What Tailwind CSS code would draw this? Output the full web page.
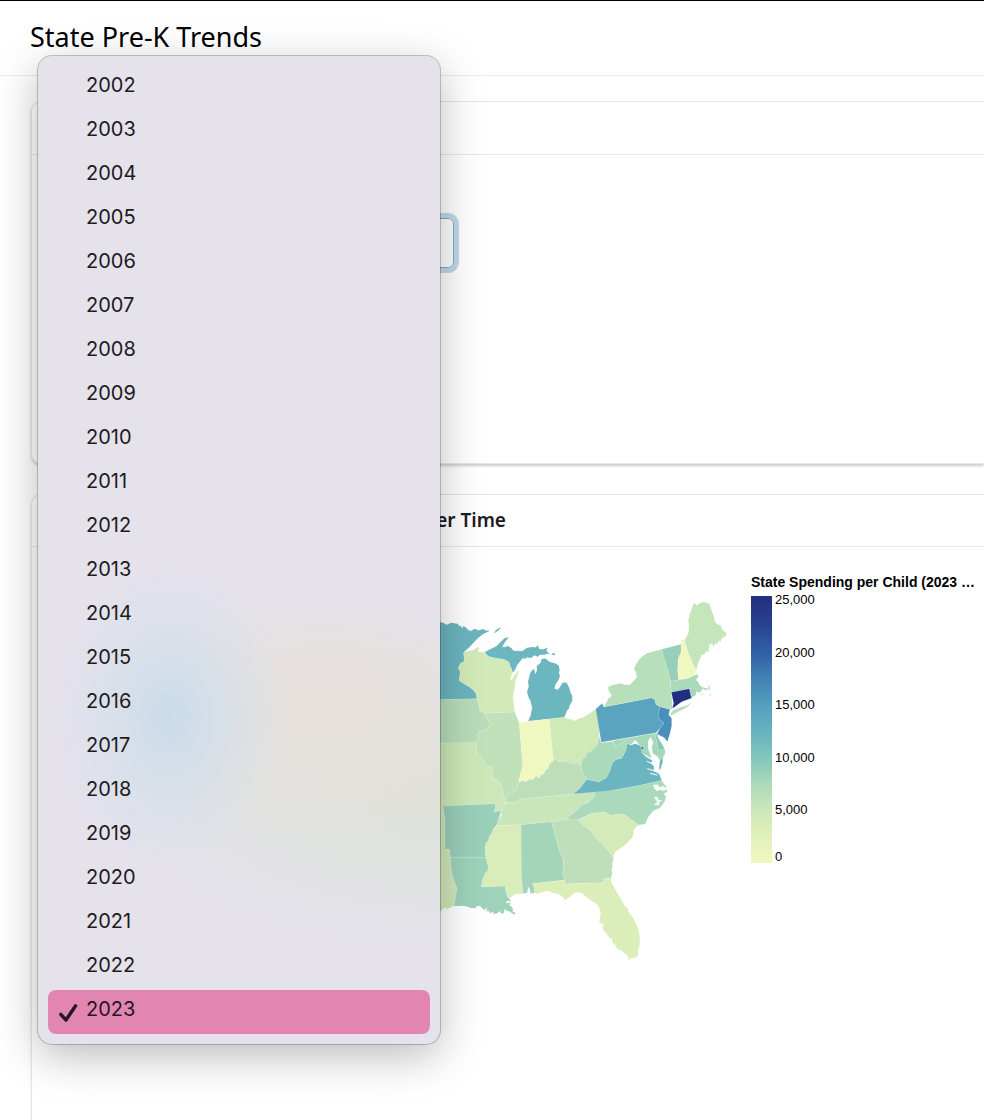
<!DOCTYPE html>
<html lang="en">
<head>
<meta charset="utf-8">
<title>State Pre-K Trends</title>
<script src="https://cdn.jsdelivr.net/npm/@tailwindcss/browser@4"></script>
</head>
<body class="h-screen overflow-hidden bg-white font-['Noto_Sans','Open_Sans',sans-serif] text-black">
<div class="flex min-h-full flex-col border-t border-black">
  <header class="flex h-[75px] shrink-0 items-center border-b border-[#e9e9e9] pb-[2px] pl-[30px]">
    <h1 class="text-[27px] leading-9">State Pre-K Trends</h1>
  </header>
  <main class="flex flex-col gap-[30px] pt-[25px] pl-[31px]">
    <section class="flex h-[363px] flex-col rounded-l-[10px] border border-r-0 border-[#e6e6e6] shadow-[0_2px_3px_rgba(0,0,0,0.2)]">
      <div class="h-[53px] shrink-0 border-b border-[#e9e9e9]"></div>
      <div class="relative pt-[63px] pl-5">
        <select id="year" aria-label="Year" class="block h-[50px] w-[402px] appearance-none rounded-md border border-[#7aaccd] bg-white outline-[5px] outline-[#bed9ea]">
          <option selected>2023</option>
        </select>
        <div role="listbox" aria-label="Year" class="absolute -top-[99px] left-[6px] z-10 flex w-[402px] flex-col rounded-[14px] bg-[#e5e2ec] bg-[radial-gradient(ellipse_115px_150px_at_132px_660px,#c9dbea_0%,#d2dfeab0_45%,#e5e2ec00_100%),radial-gradient(ellipse_220px_130px_at_285px_655px,#e6e0da_0%,#e6e1dcb0_50%,#e5e2ec00_100%),radial-gradient(ellipse_330px_160px_at_402px_735px,#dee1d8_0%,#dfe2dde0_45%,#e5e2ec00_100%)] px-[10px] py-[10px] font-['Inter',sans-serif] text-[20px] text-[#1c1b20] shadow-[0_0_0_1px_rgba(0,0,0,0.22),0_12px_44px_rgba(0,0,0,0.27)]">
          <button role="option" class="h-11 pb-[6px] pl-[38px] text-left">2002</button>
          <button role="option" class="h-11 pb-[6px] pl-[38px] text-left">2003</button>
          <button role="option" class="h-11 pb-[6px] pl-[38px] text-left">2004</button>
          <button role="option" class="h-11 pb-[6px] pl-[38px] text-left">2005</button>
          <button role="option" class="h-11 pb-[6px] pl-[38px] text-left">2006</button>
          <button role="option" class="h-11 pb-[6px] pl-[38px] text-left">2007</button>
          <button role="option" class="h-11 pb-[6px] pl-[38px] text-left">2008</button>
          <button role="option" class="h-11 pb-[6px] pl-[38px] text-left">2009</button>
          <button role="option" class="h-11 pb-[6px] pl-[38px] text-left">2010</button>
          <button role="option" class="h-11 pb-[6px] pl-[38px] text-left">2011</button>
          <button role="option" class="h-11 pb-[6px] pl-[38px] text-left">2012</button>
          <button role="option" class="h-11 pb-[6px] pl-[38px] text-left">2013</button>
          <button role="option" class="h-11 pb-[6px] pl-[38px] text-left">2014</button>
          <button role="option" class="h-11 pb-[6px] pl-[38px] text-left">2015</button>
          <button role="option" class="h-11 pb-[6px] pl-[38px] text-left">2016</button>
          <button role="option" class="h-11 pb-[6px] pl-[38px] text-left">2017</button>
          <button role="option" class="h-11 pb-[6px] pl-[38px] text-left">2018</button>
          <button role="option" class="h-11 pb-[6px] pl-[38px] text-left">2019</button>
          <button role="option" class="h-11 pb-[6px] pl-[38px] text-left">2020</button>
          <button role="option" class="h-11 pb-[6px] pl-[38px] text-left">2021</button>
          <button role="option" class="h-11 pb-[6px] pl-[38px] text-left">2022</button>
          <button role="option" aria-selected="true" class="flex h-11 items-start gap-2 rounded-lg bg-[#e385b1] pt-1 pl-[10px] text-left text-[#231720]">
            <svg class="mt-[9px] h-5 w-5" viewBox="0 0 20 20" fill="none" stroke="currentColor" stroke-width="3.4" stroke-linecap="round" stroke-linejoin="round" aria-hidden="true"><path d="M2.8 11.4 L8 17 L17.6 2.8"/></svg>
            <span>2023</span>
          </button>
        </div>
      </div>
    </section>
    <section class="flex h-[680px] shrink-0 flex-col rounded-l-[10px] border border-r-0 border-[#e6e6e6] shadow-[0_2px_3px_rgba(0,0,0,0.1)]">
      <div class="flex h-[52px] shrink-0 items-center border-b border-[#e9e9e9]">
        <h2 class="w-[474px] text-right text-[19px] font-semibold text-[#1c1c1f]">Over Time</h2>
      </div>
      <div class="flex pt-[24px]">
        <svg class="mt-[19px] ml-[398px] h-[380px] w-[300px] shrink-0" viewBox="0 0 900 1140" role="img" aria-label="Map of state spending per child" stroke="#ffffff" stroke-opacity=".14" stroke-width="2.5" stroke-linejoin="round">
          <!-- Minnesota -->
          <path fill="#6bb5bf" d="M0 95L32 97 40 98 46 102 52 104 57 101 62 98 70 99 82 101 88 107 93 109 97 115 100 108 107 112 112 117 120 123 127 121 134 116 144 121 154 119 160 116 165 121 180 122 160 132 145 143 132 157 118 172 106 182 101 187 103 214 90 222 85 235 91 245 88 272 105 283 120 292 134 304 139 313 141 326 0 330Z"/>
          <path fill="#6bb5bf" d="M192 129L198 120 208 113 213 112 207 120 195 129Z"/>
          <!-- Wisconsin -->
          <path fill="#d2eab8" d="M101 187L112 184 130 180 144 171 148 176 145 186 160 187 166 192 175 199 200 205 222 208 238 217 240 228 245 236 248 247 243 262 240 272 247 268 258 250 268 237 264 252 256 275 255 292 250 310 249 330 253 350 254 366 200 368 163 370 149 361 146 340 141 326 139 313 134 304 120 292 105 283 88 272 91 245 85 235 90 222 103 214Z"/>
          <!-- Michigan -->
          <path fill="#6bb6bf" d="M163 187L180 178 200 168 212 155 224 144 237 142 228 152 220 165 217 172 222 170 226 172 232 167 244 174 249 180 254 183 266 182 276 184 290 174 304 171 318 172 324 164 327 177 340 178 352 173 350 183 360 193 350 191 345 194 330 194 322 201 318 197 310 197 306 203 298 204 292 202 286 206 278 205 272 212 262 224 257 236 250 247 248 247 245 236 240 228 238 217 222 208 200 205 175 199Z"/>
          <path fill="#6bb6bf" d="M364 194L370 188 376 191 374 196Z"/>
          <path fill="#6bb6bf" d="M334 208L344 205 352 209 358 215 375 220 386 226 389 240 387 248 390 258 386 270 376 284 374 296 384 299 392 287 398 278 404 277 410 278 418 294 421 306 427 318 427 332 420 345 417 355 411 362 403 382 358 387 294 394 302 376 306 352 302 335 294 318 291 305 296 290 294 275 298 258 302 245 312 236 316 252 321 240 320 228 332 218Z"/>
          <!-- Iowa, Missouri, Illinois -->
          <path fill="#b8dcba" d="M0 330L141 326 146 340 149 361 163 370 168 380 175 390 181 402 178 410 170 418 147 425 142 435 145 445 138 458 0 460Z"/>
          <path fill="#cde8b8" d="M0 460L138 458 139 480 145 495 160 510 165 523 172 530 183 528 190 538 185 555 187 565 198 570 210 578 217 595 219 612 230 626 226 640 219 650 214 663 190 665 197 654 195 641 110 645 38 648 0 648Z"/>
          <path fill="#c1e1bb" d="M163 370L254 366 262 385 268 400 277 510 279 528 272 550 266 575 262 588 260 600 252 602 244 610 232 610 228 628 219 612 217 595 210 578 198 570 187 565 185 555 190 538 183 528 172 530 165 523 160 510 145 495 139 480 138 458 145 445 142 435 147 425 170 418 178 410 181 402 175 390 168 380Z"/>
          <!-- Indiana, Ohio -->
          <path fill="#f0f8c1" d="M268 399L292 394 358 387 366 470 370 512 358 523 355 535 347 540 340 555 335 551 328 564 318 558 308 570 300 567 288 576 277 569 266 578 272 550 279 528 277 510Z"/>
          <path fill="#d0e9b8" d="M358 387L403 382 415 388 422 387 435 392 445 386 460 382 480 370 497 357 505 395 508 420 508 440 500 468 480 485 470 490 467 500 458 505 452 528 440 516 430 524 425 519 415 520 408 513 390 516 375 508 370 512 366 470Z"/>
          <!-- Kentucky, Tennessee -->
          <path fill="#bddeb9" d="M228 638L229 622 232 610 244 610 252 602 260 600 264 578 277 571 288 576 300 567 308 570 318 558 328 564 335 551 340 555 347 540 355 535 358 523 370 512 375 508 390 516 408 513 415 520 425 519 430 524 440 516 452 528 458 550 472 568 465 575 450 595 430 612 300 625 268 628 265 635Z"/>
          <path fill="#c8e6ba" d="M228 638L265 635 268 628 300 625 430 612 495 604 493 620 475 638 455 645 435 665 415 680 410 688 365 695 273 704 200 707 205 690 214 675 214 663 219 650Z"/>
          <!-- Arkansas, Louisiana, Texas, Mississippi -->
          <path fill="#9acfba" d="M38 648L195 641 197 654 190 665 214 663 210 675 205 690 200 705 190 716 187 728 178 740 175 752 168 760 165 780 168 802 61 802 58 778 45 778 45 690Z"/>
          <path fill="#cfe8b9" d="M0 648L38 648 45 690 45 778 58 778 61 802 65 848 75 880 81 895 75 930 72 948 50 958 45 952 30 965 0 985Z"/>
          <path fill="#9ed2ba" d="M61 802L168 802 175 830 174 842 165 850 158 870 154 890 225 888 228 905 233 920 243 932 230 934 228 940 242 937 238 946 245 950 250 958 247 963 257 970 252 974 240 965 230 962 224 957 222 968 215 972 209 964 200 971 192 972 189 966 180 970 175 962 168 965 172 954 162 960 150 948 140 948 138 955 125 955 105 948 72 948 75 930 81 895 75 880 65 848Z"/>
          <path fill="#d9edba" d="M200 707L274 704 274 860 279 912 255 912 243 922 233 924 228 905 225 888 154 890 158 870 165 850 174 842 175 830 168 802 165 780 168 760 175 752 178 740 187 728 190 716Z"/>
          <!-- Alabama, Georgia, Florida -->
          <path fill="#a4d5bb" d="M273 704L365 695 385 770 391 790 401 810 400 840 398 850 404 870 308 881 314 895 314 908 302 912 299 896 295 891 291 910 279 910 274 860Z"/>
          <path fill="#bedfb9" d="M365 695L410 688 450 685 449 694 460 705 480 720 500 745 520 765 540 788 550 802 550 812 547 818 548 830 545 838 547 850 543 865 522 866 520 884 517 878 405 882 404 870 398 850 400 840 401 810 391 790 385 770Z"/>
          <path fill="#dbeeba" d="M308 881L404 870 405 882 517 878 520 884 522 866 543 865 545 880 560 905 575 930 582 945 595 957 594 964 610 985 622 1010 628 1030 630 1062 624 1080 624 1095 620 1102 605 1104 597 1110 590 1095 575 1082 562 1078 556 1065 548 1060 546 1045 540 1046 525 1025 517 1015 521 1004 512 1000 508 998 512 970 508 955 500 942 480 930 460 913 445 906 430 911 415 925 405 930 395 918 385 912 370 910 355 902 340 905 320 912 314 908 314 895Z"/>
          <!-- Carolinas -->
          <path fill="#aadabb" d="M495 604L540 602 630 586 695 571 700 580 708 588 712 605 700 612 708 618 705 632 697 645 688 655 670 662 655 680 646 702 625 705 580 672 540 676 525 667 480 672 450 687 410 688 415 680 435 665 455 645 475 638 493 620Z"/>
          <path fill="#fff" stroke="none" d="M669 584L683 584 690 592 699 588 712 596 703 602 690 600 680 603 672 594ZM672 622L682 620 686 630 697 632 686 638 690 644 671 645 682 636Z"/>
          <path fill="#d3ebb9" d="M450 687L480 672 495 668 525 667 540 676 580 672 626 705 612 718 608 742 588 762 568 778 555 785 550 802 540 788 520 765 500 745 480 720 460 705 449 694Z"/>
          <!-- Virginia, West Virginia, Maryland, Delaware -->
          <path fill="#6bb5c0" d="M430 612L450 595 465 575 472 568 490 572 508 575 530 562 540 540 548 515 560 508 575 504 588 480 590 460 604 466 613 461 626 464 638 474 637 490 648 500 668 512 663 518 672 530 671 542 688 552 691 560 695 571 630 586 540 602Z"/>
          <path fill="none" stroke="#fff" stroke-opacity="1" stroke-width="3" d="M650 514L670 522M652 536L676 544M660 550L682 555"/>
          <path fill="#6bb5c0" d="M687 536L690 510 698 500 698 517 690 540Z"/>
          <path fill="#abdabb" d="M452 528L458 505 467 500 470 490 480 485 500 468 508 440 514 458 550 454 555 475 570 462 590 450 615 450 604 464 590 460 588 480 575 504 560 508 548 515 540 540 530 562 508 575 490 572 472 568 458 550Z"/>
          <path fill="#a5d7bb" d="M550 452L675 430 683 470 705 480 706 490 698 503 690 512 683 500 668 490 665 470 670 458 661 440 654 455 655 478 660 490 665 505 655 500 635 488 632 468 615 450 590 450 570 462 555 475Z"/>
          <path fill="#88c9bc" d="M675 430L681 431 685 445 698 465 705 480 685 478Z"/>
          <path fill="#3b3f80" stroke="none" d="M636 471L640 474 637 478 634 474Z"/>
          <!-- Pennsylvania, New Jersey, New York -->
          <path fill="#5ba4c0" d="M497 357L517 340 521 351 665 323 675 330 678 343 690 350 684 375 688 388 702 400 690 415 678 428 514 457Z"/>
          <path fill="#4a8ebb" d="M690 350L720 358 716 374 725 385 725 408 720 430 712 455 703 443 681 432 690 415 702 400 688 388 684 375Z"/>
          <path fill="#b7dfba" d="M521 351L535 326 545 318 535 300 535 290 550 284 570 280 585 284 600 284 610 274 620 262 618 245 612 238 618 222 630 205 650 190 695 178 705 215 715 245 721 274 724 310 727 340 726 357 720 358 690 350 678 343 675 330 665 323Z"/>
          <path fill="#b7dfba" d="M720 373L730 360 755 350 768 348 785 336 772 352 745 365 725 376Z"/>
          <!-- New England -->
          <path fill="#98cfba" d="M695 178L753 163 754 185 745 205 743 240 746 270 721 274 715 245 705 215Z"/>
          <path fill="#f0f8c1" d="M753 163L755 150 764 148 775 190 790 225 799 240 794 256 775 265 746 270 743 240 746 205 754 185Z"/>
          <path fill="#c5e5ba" d="M764 150L775 130 777 110 775 90 780 70 792 38 800 46 812 38 822 35 838 42 850 75 856 98 866 104 872 106 876 118 890 130 886 140 875 144 872 155 866 152 862 163 856 160 850 170 846 160 838 165 836 186 828 184 822 196 816 193 806 215 799 240 790 225 775 190Z"/>
          <path fill="#abdabb" d="M721 274L746 270 775 265 794 256 802 253 806 258 798 270 805 276 808 284 818 292 835 296 836 286 828 283 838 286 840 298 826 300 818 296 810 308 800 305 793 293 778 296 724 307Z"/>
          <path fill="#abdabb" d="M812 314L822 310 818 315ZM838 314L844 312 842 317Z"/>
          <path fill="#a5d5ba" d="M778 296L793 293 800 303 797 315 784 325Z"/>
          <path fill="#212f80" d="M724 307L778 296 784 325 755 335 735 350 727 355 731 340Z"/>
        </svg>
        <figure class="ml-[21px] flex flex-col font-['Liberation_Sans',Arial,sans-serif]">
          <figcaption class="h-[25px] text-[14px] leading-[22px] font-bold whitespace-nowrap">State Spending per Child (2023 …</figcaption>
          <div class="flex gap-[3px]">
            <div class="h-[267px] w-[21px] bg-[linear-gradient(#22307f_0%,#28408f_10%,#3263a6_22%,#4283b5_31%,#559fbe_41%,#68b3bf_51%,#84c6bc_61%,#aedab9_71%,#cee8b8_81%,#e1f0bb_90%,#f0f8c1_100%)]"></div>
            <ul class="-mt-1 grid h-[273px] grid-rows-[53px_52px_53px_52px_47px_16px] text-[13px] leading-4">
              <li>25,000</li><li>20,000</li><li>15,000</li><li>10,000</li><li>5,000</li><li>0</li>
            </ul>
          </div>
        </figure>
      </div>
    </section>
  </main>
</div>
</body>
</html>
